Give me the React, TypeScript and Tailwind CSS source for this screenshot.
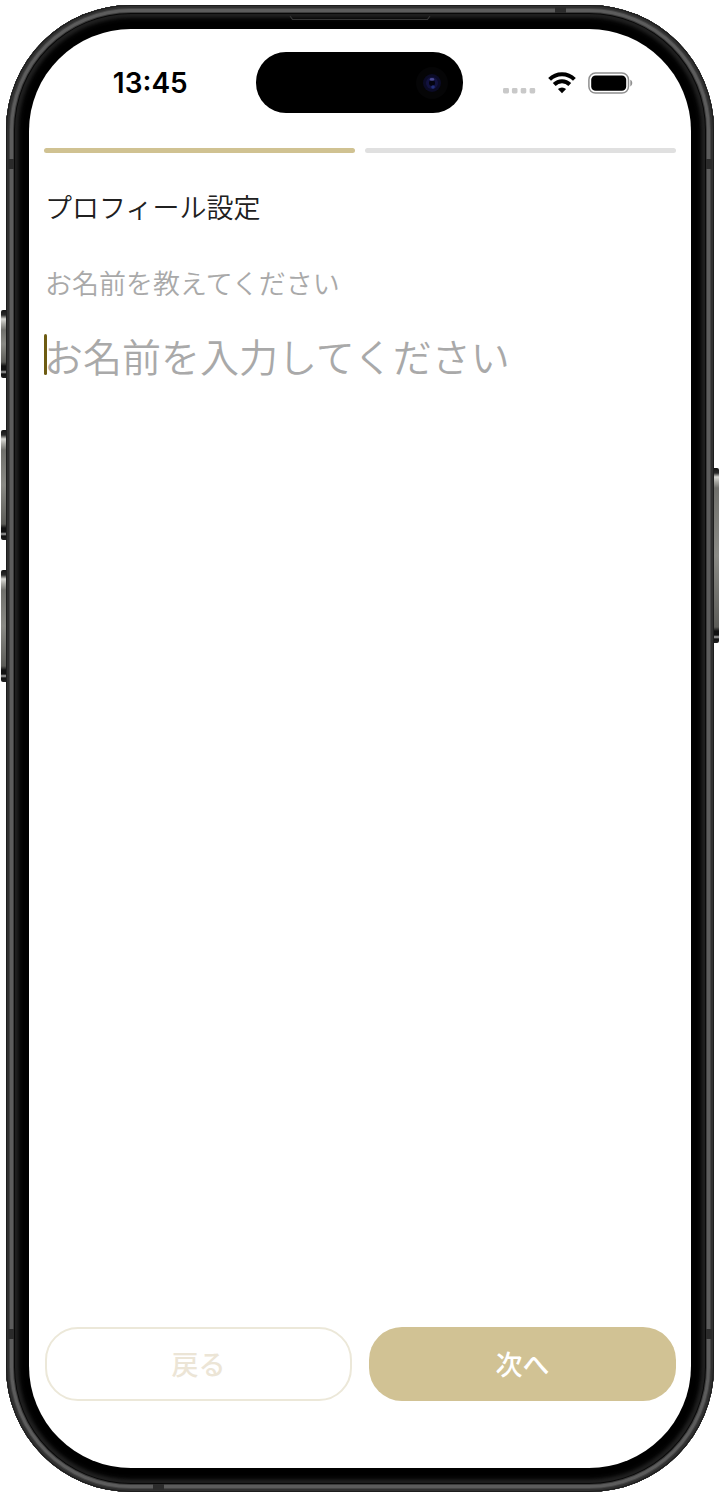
import React, { useState } from "react";

function SignalDots() {
  return (
    <svg width="33" height="22" viewBox="0 0 33 22" fill="#c9c9c9" aria-hidden="true">
      <rect x="0" y="16" width="6" height="5.4" rx="1.4" />
      <rect x="8.9" y="16" width="5.6" height="5.4" rx="1.4" />
      <rect x="17.7" y="16" width="5.6" height="5.4" rx="1.4" />
      <rect x="26.6" y="16" width="5.6" height="5.4" rx="1.4" />
    </svg>
  );
}

function WifiIcon() {
  return (
    <svg width="28" height="22" viewBox="0 0 28 22" fill="none" aria-hidden="true">
      <path d="M1.6 7.4 A17.6 17.6 0 0 1 26.4 7.4" stroke="#000" strokeWidth="4" />
      <path d="M6.2 12.5 A11 11 0 0 1 21.8 12.5" stroke="#000" strokeWidth="4" />
      <path d="M14 21.2 L9.9 17.1 A6.2 6.2 0 0 1 18.1 17.1 Z" fill="#000" />
    </svg>
  );
}

function BatteryIcon() {
  return (
    <svg width="45" height="22" viewBox="0 0 45 22" fill="none" aria-hidden="true">
      <rect x="0.9" y="1.1" width="39.6" height="20" rx="6.6" stroke="#8f8f8f" strokeWidth="1.5" />
      <rect x="3.2" y="3.4" width="35" height="15.4" rx="4.4" fill="#000" />
      <path d="M42.3 7.8 C44.9 9 44.9 13.2 42.3 14.4 Z" fill="#8f8f8f" />
    </svg>
  );
}

function CameraLens() {
  return (
    <svg width="34" height="34" viewBox="0 0 34 34" aria-hidden="true">
      <circle cx="17" cy="17" r="16" fill="#050506" />
      <circle cx="17" cy="17" r="9" fill="#0b0b26" />
      <circle cx="17" cy="17" r="6" fill="#12123f" />
      <circle cx="17" cy="17" r="3" fill="#04040f" />
      <ellipse cx="17" cy="13.4" rx="2.4" ry="1.3" fill="#4a4a92" />
      <circle cx="18" cy="21" r="1.8" fill="#23307a" />
    </svg>
  );
}

const keyShade =
  "absolute w-[5px] bg-[linear-gradient(to_bottom,#151515_0,#2a2a2a_5px,#d8d8d4_9px,#a5a5a0_14px,#70706c_20px,#8a8a85_50%,#5c5c58_calc(100%-16px),#111_calc(100%-12px),#111_calc(100%-8px),#aaa_calc(100%-6px),#111_calc(100%-4px),#222_100%)]";

function FrameDetails() {
  return (
    <div aria-hidden="true">
      <span className={`${keyShade} -left-[5px] top-[305px] h-[68px] rounded-l-xs`} />
      <span className={`${keyShade} -left-[5px] top-[425px] h-[110px] rounded-l-xs`} />
      <span className={`${keyShade} -left-[5px] top-[565px] h-[112px] rounded-l-xs`} />
      <span className={`${keyShade} -right-[5px] top-[463px] h-[175px] rounded-r-xs`} />
      <span className="absolute left-[2px] top-[154px] h-[10px] w-[6px] bg-[#2b2b2b]" />
      <span className="absolute right-[2px] top-[154px] h-[10px] w-[6px] bg-[#2b2b2b]" />
      <span className="absolute bottom-[153px] left-[2px] h-[10px] w-[6px] bg-[#2b2b2b]" />
      <span className="absolute bottom-[153px] right-[2px] h-[10px] w-[6px] bg-[#2b2b2b]" />
      <span className="absolute right-[148px] top-[2px] h-[6px] w-[11px] bg-[#2b2b2b]" />
      <span className="absolute bottom-[2px] left-[147px] h-[6px] w-[11px] bg-[#2b2b2b]" />
      <svg className="absolute left-1/2 top-[10px] -translate-x-1/2" width="142" height="7" viewBox="0 0 142 7" fill="none">
        <path d="M1 1 L3.5 4.5 H138.5 L141 1" stroke="#363636" strokeWidth="1.2" />
      </svg>
    </div>
  );
}

function StatusBar() {
  return (
    <div className="flex h-[61px] items-center">
      <div className="flex flex-1 justify-center pl-4">
        <time className="font-['Inter',sans-serif] text-[28px] leading-8 font-semibold text-black">13:45</time>
      </div>
      <div className="flex h-full w-[207px] items-center justify-end rounded-[30px] bg-black pr-[14px]">
        <CameraLens />
      </div>
      <div className="flex flex-1 items-center justify-center gap-3 pr-[18px]">
        <SignalDots />
        <WifiIcon />
        <BatteryIcon />
      </div>
    </div>
  );
}

export default function App() {
  const [name, setName] = useState("");

  return (
    <div className="flex min-h-screen flex-col bg-white px-[6px] pt-[5px] pb-[3px] font-['Noto_Sans_CJK_JP',sans-serif]">
      <div className="relative flex flex-1 flex-col rounded-[125px] bg-black px-[23px] py-[24px] shadow-[inset_0_0_0_1px_#1d1d1d,inset_0_0_0_3px_#303030,inset_0_0_0_4px_#454545,inset_0_0_0_7px_#5c5c5c,inset_0_0_0_8px_#3c3c3c,inset_0_0_0_9px_#080808,inset_0_0_3px_12px_#202020,inset_0_0_4px_14px_#101010]">
        <FrameDetails />
        <div className="flex flex-1 flex-col rounded-[102px] bg-white pt-[23px] pb-[67px]">
          <StatusBar />
          <main className="flex flex-1 flex-col px-[15px] pt-[35px]">
            <div className="flex gap-[10px]" role="progressbar" aria-label="プロフィール設定" aria-valuenow={1} aria-valuemin={0} aria-valuemax={2}>
              <span className="h-[5px] flex-1 rounded-full bg-[#d0c292]" />
              <span className="h-[5px] flex-1 rounded-full bg-[#e0e0e0]" />
            </div>
            <form className="flex flex-1 flex-col" onSubmit={(e) => e.preventDefault()}>
              <h1 className="mt-[38px] pl-px text-[27px] leading-8 font-[350] text-[#202020]">プロフィール設定</h1>
              <label htmlFor="name" className="mt-[44px] pl-px text-[27px] leading-8 font-[350] text-[#a9a9a9]">
                お名前を教えてください
              </label>
              <div className="relative mt-[34px]">
                <input
                  id="name"
                  type="text"
                  value={name}
                  onChange={(e) => setName(e.target.value)}
                  placeholder="お名前を入力してください"
                  className="h-11 w-full bg-transparent text-[39px] leading-11 font-[350] text-[#202020] outline-none placeholder:text-[#a9a9a9] placeholder:opacity-100"
                />
                {name === "" && <span className="absolute top-px left-0 h-[41px] w-[3px] rounded-full bg-[#6e5c12]" />}
              </div>
              <div className="mt-auto grid grid-cols-2 gap-[17px] pl-px text-[27px] leading-8 font-medium">
                <button type="button" className="h-[74px] rounded-[33px] border-2 border-[#ece8d9] text-[#ece5d6]">
                  戻る
                </button>
                <button type="submit" className="h-[74px] rounded-[33px] bg-[#d1c294] text-white">
                  次へ
                </button>
              </div>
            </form>
          </main>
        </div>
      </div>
    </div>
  );
}
